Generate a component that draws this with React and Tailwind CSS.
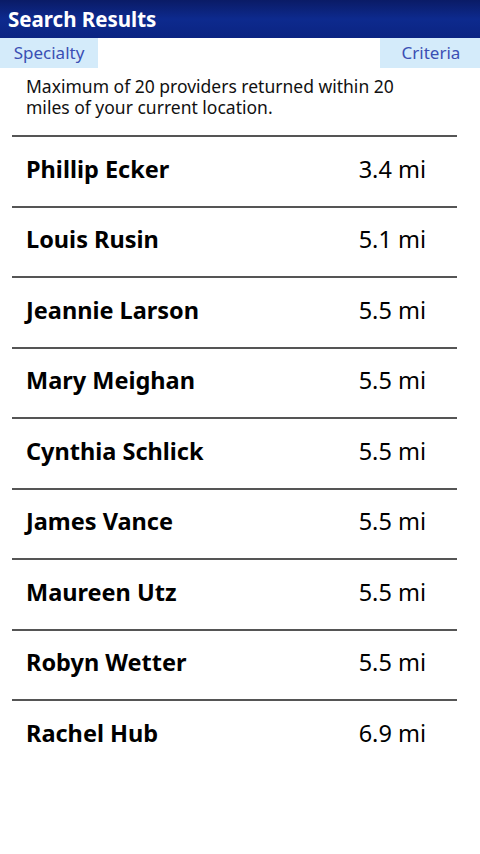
export default function App() {
  const rows = [
    ["Phillip Ecker", "3.4 mi"],
    ["Louis Rusin", "5.1 mi"],
    ["Jeannie Larson", "5.5 mi"],
    ["Mary Meighan", "5.5 mi"],
    ["Cynthia Schlick", "5.5 mi"],
    ["James Vance", "5.5 mi"],
    ["Maureen Utz", "5.5 mi"],
    ["Robyn Wetter", "5.5 mi"],
    ["Rachel Hub", "6.9 mi"],
  ];
  return (
    <div className="w-[480px] h-[854px] bg-white overflow-hidden" style={{ fontFamily: '"Noto Sans", "Open Sans", sans-serif' }}>
      <div className="h-[38px] bg-gradient-to-b from-[#0a1b66] via-[#0d2a8e] to-[#0b2482] flex items-center px-[8px]">
        <span className="text-white font-bold text-[20.5px] leading-none">Search Results</span>
      </div>
      <div className="h-[30px] flex justify-between">
        <div className="w-[98px] bg-[#d4ebfa] text-[#3b4fb4] text-[17px] flex items-center justify-center">Specialty</div>
        <div className="w-[100px] bg-[#d4ebfa] text-[#3b4fb4] text-[17px] flex items-center justify-center pl-[2px]">Criteria</div>
      </div>
      <div className="pl-[26px] pr-[60px] pt-[8px] h-[67px] text-[17.5px] leading-[21px] text-[#111]">
        Maximum of 20 providers returned within 20 miles of your current location.
      </div>
      <div className="mx-[12px] w-[445px]">
        {rows.map(([n, d], i) => (
          <div key={i} className="h-[70.5px] border-t-2 border-[#555] flex items-center justify-between pl-[14px] pr-[31px] pb-[4px]">
            <span className="font-bold text-[23.5px] text-black">{n}</span>
            <span className="text-[23.5px] text-black">{d}</span>
          </div>
        ))}
      </div>
    </div>
  );
}
